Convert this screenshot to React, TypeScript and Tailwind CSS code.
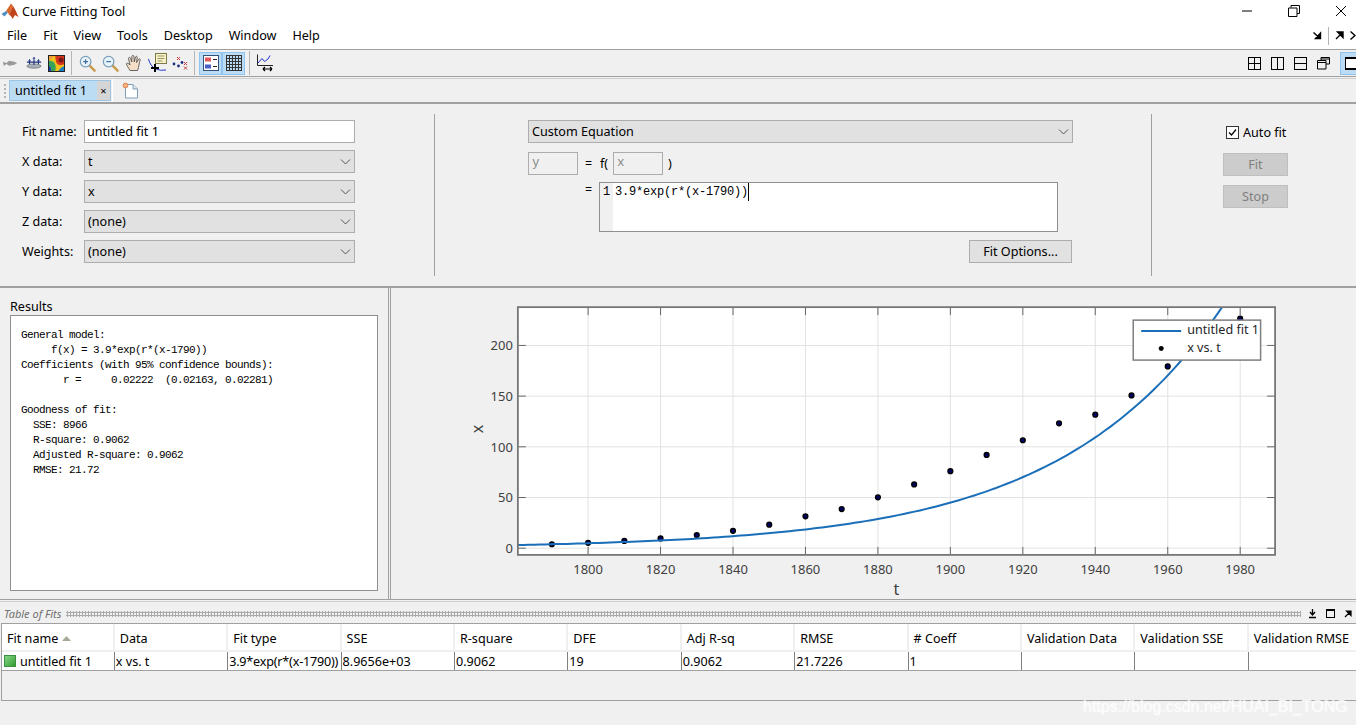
const years = [1790,1800,1810,1820,1830,1840,1850,1860,1870,1880,1890,1900,1910,1920,1930,1940,1950,1960,1970,1980];
const census = [3.9,5.3,7.2,9.6,12.9,17.1,23.2,31.4,38.6,50.2,62.9,76,92,106.5,123.2,131.7,150.7,179.3,203.2,226.5];

// plot coords are page pixels, the svg sits at 390,289
const px = (t: number) => 587.3 + (t - 1800) * 3.6265;
const py = (v: number) => 549.3 - v * 1.0148;

function curve() {
  const pts: string[] = [];
  for (let t = 1780.6; t <= 1976; t += 1.5) {
    pts.push(`${px(t).toFixed(1)},${py(3.9 * Math.exp(0.02222 * (t - 1790))).toFixed(1)}`);
  }
  return pts.join(" ");
}

function Plot() {
  const xt = [1800,1820,1840,1860,1880,1900,1920,1940,1960,1980];
  const yt = [0,50,100,150,200];
  return (
    <svg viewBox="390 289 966 311" className="w-full h-full block" style={{ fontFamily: '"Noto Sans", sans-serif' }}>
      <rect x="517" y="308" width="758" height="248" fill="#fff" />
      {xt.map((t) => <line key={t} x1={px(t)} x2={px(t)} y1="308" y2="556" stroke="#e2e2e2" strokeWidth="1" />)}
      {yt.map((v) => <line key={v} x1="517" x2="1275" y1={py(v)} y2={py(v)} stroke="#e2e2e2" strokeWidth="1" />)}
      {xt.map((t) => (
        <g key={t}>
          <line x1={px(t)} x2={px(t)} y1="556" y2="548" stroke="#666" />
          <line x1={px(t)} x2={px(t)} y1="308" y2="316" stroke="#666" />
          <text x={px(t)} y="575" textAnchor="middle" fontSize="13" fill="#404040">{t}</text>
        </g>
      ))}
      {yt.map((v) => (
        <g key={v}>
          <line x1="517" x2="525" y1={py(v)} y2={py(v)} stroke="#666" />
          <line x1="1275" x2="1267" y1={py(v)} y2={py(v)} stroke="#666" />
          <text x="512" y={py(v) + 5} textAnchor="end" fontSize="13" fill="#404040">{v}</text>
        </g>
      ))}
      <clipPath id="plotclip"><rect x="517" y="308" width="758" height="248" /></clipPath>
      <g clipPath="url(#plotclip)">
        {years.map((t, i) => <circle key={t} cx={px(t)} cy={py(census[i])} r="2.4" fill="#00006a" stroke="#000" strokeWidth="1.4" />)}
        <polyline points={curve()} fill="none" stroke="#1a6fb8" strokeWidth="2" />
      </g>
      <rect x="517" y="308" width="758" height="248" fill="none" stroke="#767676" strokeWidth="1.8" />
      <rect x="1133" y="321" width="127.5" height="40" fill="#fff" stroke="#7f7f7f" strokeWidth="1.5" />
      <line x1="1141" x2="1181" y1="332" y2="332" stroke="#1a6fb8" strokeWidth="2" />
      <circle cx="1161" cy="349.5" r="2.5" fill="#000" />
      <text x="1187" y="334.5" fontSize="12.6" fill="#262626">untitled fit 1</text>
      <text x="1187" y="352.5" fontSize="12.6" fill="#262626">x vs. t</text>
      <text x="896" y="596" textAnchor="middle" fontSize="16" fill="#404040">t</text>
      <text x="0" y="0" textAnchor="middle" fontSize="16" fill="#404040" transform="translate(482 430) rotate(-90)">x</text>
    </svg>
  );
}

function Chevron() {
  return (
    <svg width="11" height="6" viewBox="0 0 11 6" className="shrink-0">
      <path d="M1 0.5 L5.5 5 L10 0.5" fill="none" stroke="#555" strokeWidth="1" />
    </svg>
  );
}

function Select({ value, className }: { value: string; className: string }) {
  return (
    <div className={`h-[23px] flex items-center justify-between bg-[#e1e1e1] border border-[#adadad] pl-[3px] pr-[3px] ${className}`}>
      <span>{value}</span>
      <Chevron />
    </div>
  );
}

function FormRow({ label, value }: { label: string; value: string }) {
  return (
    <div className="flex items-center h-[23px]">
      <div className="w-[62px]">{label}</div>
      <Select value={value} className="w-[271px]" />
    </div>
  );
}

function Sep({ className }: { className: string }) {
  return <div className={`w-px h-[24px] bg-[#b5b5b5] ${className}`} />;
}

function MatlabLogo() {
  return (
    <svg width="18" height="17" viewBox="0 0 18 17">
      <path d="M0.5 11 L5 8 L7 9.5 L3.5 13.5 Z" fill="#4f8fc4" />
      <path d="M5 8 L10 0.5 L12 3 L8 12 L7 9.5 Z" fill="#d9682a" />
      <path d="M10 0.5 Q13 3 17.5 14 L14 12 L11.5 16 Q10 12 8 12 L12 3 Z" fill="#c0431c" />
    </svg>
  );
}

function PlotFish() {
  return (
    <svg width="16" height="18" viewBox="0 0 18 18">
      <path d="M1 7.5 L5 9 L8 6.5 L14 7.5 L17 9 L14 11 L8 12 L5 10 L2 12.5 Z" fill="#9a9a9a" />
    </svg>
  );
}

function Brush3d() {
  return (
    <svg width="16" height="18" viewBox="0 0 18 18">
      <ellipse cx="9" cy="12.5" rx="8" ry="2.4" fill="#a8b0ba" stroke="#4a4a4a" strokeWidth="0.6" />
      <path d="M1 8 h16 M4 6 v4 M9 3 v8 M14 6 v4" stroke="#1a2f80" strokeWidth="1.2" fill="none" />
      <path d="M3 6.5 l1 -1.5 l1 1.5 M8 4 l1 -1.5 l1 1.5 M13 6.5 l1 -1.5 l1 1.5" stroke="#1a2f80" strokeWidth="1" fill="none" />
    </svg>
  );
}

function Colormap() {
  return (
    <svg width="17" height="17" viewBox="0 0 17 17">
      <rect width="17" height="17" fill="#f2c21a" />
      <path d="M0 0 h6 q-1 4 -6 6 Z" fill="#ee9f3a" />
      <path d="M0 6 q5 -1 7 3 q2 5 -1 8 H0 Z" fill="#37a35a" />
      <path d="M0 11 q3 0 3 3 v3 H0 Z" fill="#2040b0" />
      <path d="M7 0 H17 V9 Q10 12 8 7 Z" fill="#d8351f" />
      <circle cx="13" cy="5" r="2.5" fill="#7a1a1a" />
      <path d="M10 17 Q12 12 17 11 V17 Z" fill="#1d7fc0" />
      <rect x="0.5" y="0.5" width="16" height="16" fill="none" stroke="#222" />
    </svg>
  );
}

function Magnifier({ minus }: { minus?: boolean }) {
  return (
    <svg width="17" height="17" viewBox="0 0 18 18">
      <line x1="10.5" y1="10.5" x2="16.5" y2="16.5" stroke="#c89a4a" strokeWidth="2.6" strokeLinecap="round" />
      <circle cx="7" cy="7" r="5.6" fill="#e6f3fb" stroke="#7b9fb8" strokeWidth="1.3" />
      <path d={minus ? "M4.5 7 h5" : "M4.5 7 h5 M7 4.5 v5"} stroke="#3d6a96" strokeWidth="1.2" />
    </svg>
  );
}

function Hand() {
  return (
    <svg width="18" height="18" viewBox="0 0 18 18">
      <path d="M5 16.5 C3.5 13.5 1 11 1.5 9.5 C2.5 8.5 4 10 5 11 L3.5 4.5 C3.5 3 5.2 3 5.6 4.5 L6.8 8 L6.8 2.5 C7 1 8.7 1 8.9 2.5 L9.3 8 L10.5 3 C11 1.8 12.4 2.2 12.2 3.6 L11.6 8.5 L13.6 5.2 C14.4 4.2 15.6 5 15.2 6.2 C14 9 14 12.5 12.6 16.5 Z" fill="#f6dfc6" stroke="#555" strokeWidth="0.9" />
    </svg>
  );
}

function DataCursor() {
  return (
    <svg width="19" height="20" viewBox="0 0 19 20">
      <rect x="7.5" y="0.5" width="11" height="10" fill="#f8f2c8" stroke="#7e7a4a" />
      <path d="M9.5 3 h7 M9.5 5.5 h7 M9.5 8 h5" stroke="#9a9668" />
      <path d="M0.5 6 Q2 13 8 16 Q12 18 18 17" fill="none" stroke="#2233cc" />
      <path d="M7 11 v8 M3 15 h8" stroke="#000" strokeWidth="2" />
    </svg>
  );
}

function Exclude() {
  return (
    <svg width="16" height="14" viewBox="0 0 16 14">
      <path d="M5 1 l3 3 M8 1 l-3 3 M12 6 l3 3 M15 6 l-3 3 M12 10.5 l3 3 M15 10.5 l-3 3" stroke="#c43a3a" strokeWidth="1" />
      <circle cx="2" cy="8" r="1.4" fill="#1a2f80" />
      <circle cx="6.5" cy="10" r="1.4" fill="#1a2f80" />
      <circle cx="10" cy="6.5" r="1.4" fill="#1a2f80" />
    </svg>
  );
}

function LegendIcon() {
  return (
    <svg width="16" height="16" viewBox="0 0 16 16">
      <rect x="0.5" y="0.5" width="15" height="15" fill="#fff" stroke="#33507a" />
      <rect x="2" y="2.5" width="6" height="4" fill="#e05a5a" />
      <rect x="2" y="9.5" width="6" height="4" fill="#4a5fc8" />
      <path d="M10 4.5 h4 M10 11.5 h4" stroke="#222" />
    </svg>
  );
}

function GridIcon() {
  return (
    <svg width="16" height="16" viewBox="0 0 16 16">
      <path d="M0.5 0 v16 M3.5 0 v16 M6.5 0 v16 M9.5 0 v16 M12.5 0 v16 M15.5 0 v16 M0 0.5 h16 M0 3.5 h16 M0 6.5 h16 M0 9.5 h16 M0 12.5 h16 M0 15.5 h16" stroke="#333" />
    </svg>
  );
}

function AxesLimits() {
  return (
    <svg width="18" height="18" viewBox="0 0 18 18">
      <path d="M1.5 0.5 V11.5 H17" fill="none" stroke="#222" />
      <path d="M2 9 L6 4.5 L8.5 7.5 L12 5 L14 1.5" fill="none" stroke="#2233cc" />
      <path d="M7 15 h9 M7 15 l2 -2 M7 15 l2 2 M16 15 l-2 -2 M16 15 l-2 2" fill="none" stroke="#000" strokeWidth="1.2" />
    </svg>
  );
}

function Layout({ kind }: { kind: "four" | "cols" | "rows" }) {
  return (
    <svg width="13" height="13" viewBox="0 0 13 13">
      <rect x="0.5" y="0.5" width="12" height="12" fill="none" stroke="#000" />
      {kind !== "rows" && <path d="M6.5 0 v13" stroke="#000" />}
      {kind !== "cols" && <path d="M0 6.5 h13" stroke="#000" />}
    </svg>
  );
}

function ToggleBtn({ children }: { children: React.ReactNode }) {
  return (
    <div className="w-[23px] h-[23px] flex items-center justify-center bg-[#bcdcf6] border border-[#8fc4ee]">{children}</div>
  );
}

const headers = ["Fit name","Data","Fit type","SSE","R-square","DFE","Adj R-sq","RMSE","# Coeff","Validation Data","Validation SSE","Validation RMSE"];
const cells = ["untitled fit 1","x vs. t","3.9*exp(r*(x-1790))","8.9656e+03","0.9062","19","0.9062","21.7226","1","","",""];

const resultsText = `General model:
     f(x) = 3.9*exp(r*(x-1790))
Coefficients (with 95% confidence bounds):
       r =     0.02222  (0.02163, 0.02281)

Goodness of fit:
  SSE: 8966
  R-square: 0.9062
  Adjusted R-square: 0.9062
  RMSE: 21.72`;

const mono = "font-['Liberation_Mono',monospace]";

export default function App() {
  return (
    <div className="relative w-[1356px] h-[725px] overflow-hidden bg-[#f0f0f0] text-[12.6px] text-black flex flex-col font-['Noto_Sans',sans-serif] leading-[13px]">
      {/* title bar */}
      <div className="h-[25px] bg-white flex items-center justify-between">
        <div className="flex items-center pb-[2px]">
          <div className="ml-[1px] w-[21px]"><MatlabLogo /></div>
          <span>Curve Fitting Tool</span>
        </div>
        <div className="flex items-center gap-[35px] pr-[9px] pb-[3px]">
          <svg width="12" height="12" viewBox="0 0 12 12"><path d="M1 6 h10" stroke="#000" /></svg>
          <svg width="12" height="12" viewBox="0 0 12 12"><path d="M3 2.5 V0.5 H11.5 V8.5 H9 M0.5 3 H9 V11.5 H0.5 Z" fill="none" stroke="#000" /></svg>
          <svg width="12" height="12" viewBox="0 0 12 12"><path d="M1 1 L11 11 M11 1 L1 11" stroke="#000" /></svg>
        </div>
      </div>

      {/* menu */}
      <div className="h-[25px] bg-white border-b border-[#a0a0a0] flex items-center justify-between pb-[3px]">
        <div className="flex items-center pl-[7px] gap-[16px]">
          {["File","Fit","View","Tools","Desktop","Window","Help"].map((m) => <span key={m}>{m}</span>)}
        </div>
        <div className="flex items-center gap-[6px]">
          <svg width="9" height="9" viewBox="0 0 9 9"><path d="M0.5 1.5 L6 6.5 M7.5 2 V7.5 H2.5 Z" stroke="#000" strokeWidth="1.4" fill="#000" /></svg>
          <div className="w-px h-[18px] bg-[#b5b5b5]" />
          <svg width="9" height="9" viewBox="0 0 9 9"><path d="M1 8 L6.5 2.5 M2.5 1 H8 V6.5 Z" stroke="#000" strokeWidth="1.4" fill="#000" /></svg>
          <svg width="6" height="9" viewBox="0 0 6 9"><path d="M0.5 0.5 L5 4.5 L0.5 8.5" stroke="#000" strokeWidth="1.4" fill="none" /></svg>
        </div>
      </div>

      {/* toolbar */}
      <div className="h-[27px] border-b border-[#a0a0a0] flex items-center justify-between">
        <div className="flex items-center pl-[2px]">
          <PlotFish />
          <div className="ml-[8px]"><Brush3d /></div>
          <div className="ml-[6px]"><Colormap /></div>
          <Sep className="ml-[6px]" />
          <div className="ml-[7px]"><Magnifier /></div>
          <div className="ml-[6px]"><Magnifier minus /></div>
          <div className="ml-[6px]"><Hand /></div>
          <div className="ml-[5px]"><DataCursor /></div>
          <div className="ml-[5px]"><Exclude /></div>
          <Sep className="ml-[6px]" />
          <div className="flex ml-[4px]">
            <ToggleBtn><LegendIcon /></ToggleBtn>
            <ToggleBtn><GridIcon /></ToggleBtn>
          </div>
          <Sep className="ml-[4px]" />
          <div className="ml-[6px]"><AxesLimits /></div>
        </div>
        <div className="flex items-center gap-[10px]">
          <Layout kind="four" />
          <Layout kind="cols" />
          <Layout kind="rows" />
          <svg width="13" height="13" viewBox="0 0 13 13"><path d="M4 3 V0.5 H12.5 V7 H9 M0.5 3.5 H9 V12 H0.5 Z M0.5 5.5 H9 M4 2 H12.5" fill="none" stroke="#000" /></svg>
          <div className="w-[16px] h-[23px] bg-[#bcdcf6] border-l border-y border-[#8fc4ee] flex items-center justify-end">
            <div className="w-[11px] h-[13px] border-l border-y-2 border-black bg-white" />
          </div>
        </div>
      </div>

      {/* tab bar */}
      <div className="mt-[1px] h-[26px] border-t border-b-2 border-t-[#d0d0d0] border-b-[#a0a0a0] flex items-center">
        <div className="w-[9px] h-[16px] flex justify-center">
          <div className="w-[4px] h-full bg-[radial-gradient(#b5b5b5_1px,transparent_1.2px)] bg-[length:4px_4px]" />
        </div>
        <div className="w-[102px] h-[21px] bg-[#bcdcf4] border border-[#9cc4e4] flex items-center justify-between pl-[5px]">
          <span>untitled fit 1</span>
          <span className="w-[13px] h-full bg-[#d5d5d5] flex items-center justify-center text-[11px]">×</span>
        </div>
        <div className="w-px h-full bg-white ml-[1px]" />
        <div className="ml-[9px]">
          <svg width="17" height="17" viewBox="0 0 17 17">
            <path d="M3.5 2.5 H11 L15.5 7 V16 H3.5 Z" fill="#fff" stroke="#7f9db9" />
            <path d="M11 2.5 V7 H15.5" fill="#dde8f2" stroke="#7f9db9" />
            <circle cx="3.5" cy="3.5" r="2.4" fill="#f2b38a" stroke="#e07030" strokeWidth="0.8" />
          </svg>
        </div>
      </div>

      {/* fit settings */}
      <div className="h-[182px] py-[10px] flex">
        <div className="w-[435px] border-r border-[#a0a0a0] pl-[22px] pt-[6px] flex flex-col gap-[7px]">
          <div className="flex items-center h-[23px]">
            <div className="w-[62px]">Fit name:</div>
            <div className="w-[271px] h-[23px] bg-white border border-[#adadad] pl-[2px] flex items-center">untitled fit 1</div>
          </div>
          <FormRow label="X data:" value="t" />
          <FormRow label="Y data:" value="x" />
          <FormRow label="Z data:" value="(none)" />
          <FormRow label="Weights:" value="(none)" />
        </div>

        <div className="w-[717px] border-r border-[#a0a0a0] pl-[93px] pt-[6px] flex flex-col">
          <Select value="Custom Equation" className="w-[545px]" />
          <div className="flex items-center h-[23px] mt-[9px]">
            <div className={`w-[50px] h-full border border-[#adadad] pl-[3px] flex items-center text-[#8a8a8a] ${mono}`}>y</div>
            <span className="ml-[7px] w-[15px]">=</span>
            <span className="w-[13px]">f(</span>
            <div className={`w-[50px] h-full border border-[#adadad] pl-[3px] flex items-center text-[#8a8a8a] ${mono}`}>x</div>
            <span className="ml-[5px]">)</span>
          </div>
          <div className="flex mt-[7px]">
            <span className="ml-[57px] w-[14px] pt-[1px]">=</span>
            <div className="w-[459px] h-[50px] bg-white border border-[#8e8f8f] flex">
              <div className={`w-[13px] bg-[#f0f0f0] pl-[3px] pt-[3px] text-[12px] tracking-[-0.2px] ${mono}`}>1</div>
              <div className={`pl-[2px] pt-[3px] text-[12px] tracking-[-0.2px] ${mono} h-[18px] border-r border-black`}>3.9*exp(r*(x-1790))</div>
            </div>
          </div>
          <div className="flex justify-end w-[544px] mt-[8px]">
            <div className="w-[103px] h-[23px] bg-[#e1e1e1] border border-[#adadad] flex items-center justify-center">Fit Options...</div>
          </div>
        </div>

        <div className="flex-1 pl-[71px] pt-[6px] flex flex-col">
          <div className="flex items-center h-[13px] mt-[6px] gap-[4px] ml-[3px]">
            <div className="w-[13px] h-[13px] bg-white border border-[#333] flex items-center justify-center">
              <svg width="11" height="11" viewBox="0 0 11 11"><path d="M2 5.5 L4.5 8 L9 2.5" fill="none" stroke="#000" strokeWidth="1.2" /></svg>
            </div>
            <span>Auto fit</span>
          </div>
          <div className="w-[65px] h-[23px] mt-[14px] bg-[#cccccc] border border-[#bfbfbf] text-[#808080] flex items-center justify-center">Fit</div>
          <div className="w-[65px] h-[23px] mt-[9px] bg-[#cccccc] border border-[#bfbfbf] text-[#808080] flex items-center justify-center">Stop</div>
        </div>
      </div>

      {/* results and plot */}
      <div className="h-[314px] border-t-2 border-b border-[#a0a0a0] flex">
        <div className="w-[389px] shrink-0 pl-[10px] pr-[10px] pt-[12px] border-r border-[#a0a0a0] flex flex-col">
          <div className="h-[15px]">Results</div>
          <div className={`w-[368px] h-[276px] bg-white border border-[#8e8f8f] pl-[10px] pt-[12px] whitespace-pre text-[11px] tracking-[-0.6px] leading-[15px] ${mono}`}>{resultsText}</div>
        </div>
        <div className="flex-1 border-l border-[#a0a0a0] ml-[1px]">
          <Plot />
        </div>
      </div>

      {/* table of fits */}
      <div className="h-[22px] flex items-center justify-between border-t border-[#d0d0d0] mt-[1px] pt-[2px]">
        <div className="flex items-center flex-1 pl-[4px] gap-[5px]">
          <span className="italic text-[11px] text-[#707070]">Table of Fits</span>
          <div className="flex-1 h-[6px] bg-[radial-gradient(#aaaaaa_1px,transparent_1.2px)] bg-[length:3px_3px]" />
        </div>
        <div className="flex items-center gap-[9px] w-[55px] pl-[7px] shrink-0">
          <svg width="9" height="11" viewBox="0 0 9 11"><path d="M4.5 1 V6 M2 4 L4.5 7 L7 4 M1 9.5 H8" stroke="#000" strokeWidth="1.3" fill="none" /></svg>
          <div className="w-[9px] h-[9px] border border-t-2 border-black" />
          <svg width="8" height="8" viewBox="0 0 8 8"><path d="M1 7 L5.5 2.5 M2.5 1 H7 V5.5 Z" stroke="#000" strokeWidth="1.2" fill="#000" /></svg>
        </div>
      </div>
      <div className="ml-[1px] h-[78px] border-y border-l border-[#a0a0a0] overflow-hidden">
        <div className="grid grid-cols-[112.8px_repeat(11,113.4px)] w-[1360px] h-[28px] bg-white">
          {headers.map((h, i) => (
            <div key={h} className="flex items-center pl-[5px] pt-[2px] border-r-2 border-[#f0f0f0] border-b-2 whitespace-nowrap">
              <span>{h}</span>
              {i === 0 && <svg width="9" height="5" viewBox="0 0 9 5" className="ml-[4px]"><path d="M0 5 L4.5 0 L9 5 Z" fill="#a8a89a" /></svg>}
            </div>
          ))}
        </div>
        <div className="grid grid-cols-[112.8px_repeat(11,113.4px)] w-[1360px] h-[19px] bg-white border-b border-[#a0a0a0]">
          {cells.map((c, i) => (
            <div key={i} className={`flex items-center pl-[1px] whitespace-nowrap overflow-hidden border-r border-[#808080] ${i === 2 ? "tracking-[-0.2px]" : ""}`}>
              {i === 0 && <div className="ml-[1px] w-[12px] h-[12px] mr-[4px] border border-[#3f8f3f] bg-gradient-to-br from-[#86d686] to-[#2f9e2f]" />}
              {c}
            </div>
          ))}
        </div>
      </div>

      {/* blog watermark burned into the screenshot */}
      <div className="absolute left-[1083px] top-[697px] text-[16px] leading-[20px] font-['Liberation_Sans',sans-serif] text-white/70 whitespace-nowrap [text-shadow:0_0_2px_rgba(255,255,255,0.9)]">https://blog.csdn.net/HUAI_BI_TONG</div>
    </div>
  );
}
